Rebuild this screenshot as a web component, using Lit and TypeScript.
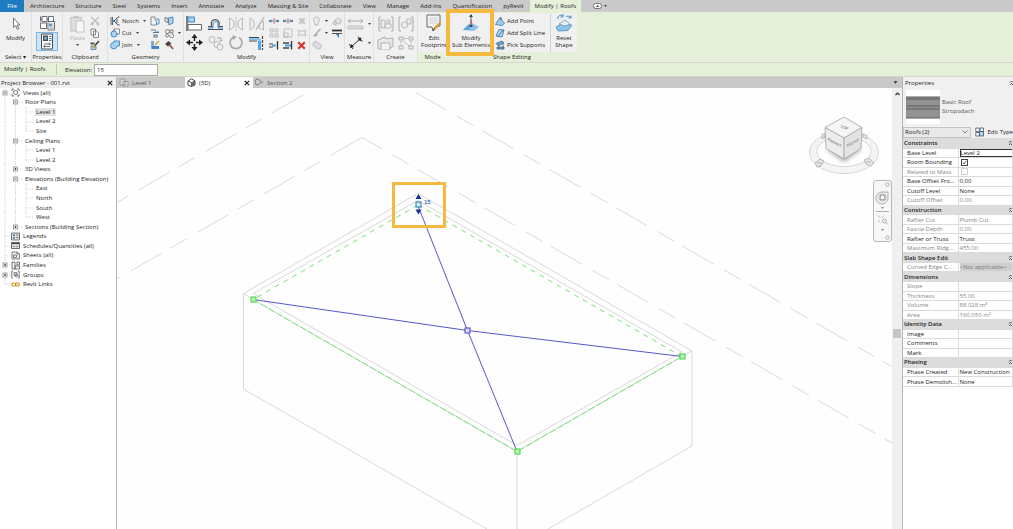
import { LitElement, html, svg, css, nothing, SVGTemplateResult, TemplateResult } from "lit";
import { customElement, property, state } from "lit/decorators.js";
import { classMap } from "lit/directives/class-map.js";

const G = "#b9b9b9";
const D = "#4a5058";
const B = "#3b86c6";
const L = "#a9d3f0";

const ICONS: Record<string, [number, number, SVGTemplateResult]> = {
  cursor: [8, 14, svg`<path d="M1.5 1v9.5l2.2-2 1.6 3.8 1.5-.7-1.6-3.6h2.6z" fill="#fff" stroke="#555" stroke-width=".8"/>`],
  types: [17, 16, svg`<g fill="#fdfdfd" stroke=${D} stroke-width=".8"><path d="M3 1.500h5v5H3zM9.500 1.500h5v5h-5zM1.500 8h6v5.500h-6zM1.500 1.500v5M8 4h1.500M1.500 4H3"/><path d="M9 6.500h6.500v8.500H9z"/></g><path d="M10.300 8.500h2.400v3h-2.400z" fill=${B}/><path d="M13.500 9h1M13.500 11h1M10.500 13h4" stroke=${D} stroke-width=".7"/>`],
  props: [16, 17, svg`<path d="M2.500 1h11v15h-11z" fill="#f4f9fd" stroke=${D} stroke-width="1"/><path d="M4 2.500h5v5.500H4z" fill=${D}/><path d="M5.300 4h2.400v2.500H5.300z" fill="#7db9e4"/><path d="M10 3.500h2.500M10 5.500h2.500M10 7.500h2.500M5 11h6M5 13.500h6M10 10l1.500 1-1.500 1M6 12.500l-1.500 1 1.500 1" fill="none" stroke=${D} stroke-width=".8"/>`],
  paste: [15, 18, svg`<path d="M.8 2.500h10.500v13.500H.8z" fill="#dedede" stroke="#c2c2c2"/><path d="M3.500 1h5v2.500h-5z" fill="#c6c6c6"/><path d="M6 6h8v11H6z" fill="#f7f7f7" stroke="#c2c2c2"/>`],
  scissors: [10, 10, svg`<path d="M1 1l7 6.500M9 1L2 7.500" stroke="#bdbdbd" stroke-width="1.100"/><circle cx="2" cy="8" r="1.200" fill="none" stroke="#bdbdbd"/><circle cx="8" cy="8" r="1.200" fill="none" stroke="#bdbdbd"/>`],
  copy: [10, 10, svg`<path d="M1 1h4.500v6H1zM3.500 3h3l2 2v4.500h-5z" fill="#fafafa" stroke="#6a6f76" stroke-width=".8"/>`],
  match: [10, 10, svg`<path d="M.5 2.500h4v2h-4z" fill="#555"/><path d="M1 6h5v3.500H1z" fill=${L} stroke="#557" stroke-width=".6"/><path d="M9 1L4.500 6" stroke="#444" stroke-width="1.600"/><path d="M5 5.500L3.500 8" stroke="#d79a2e" stroke-width="1.600"/>`],
  notch: [10, 10, svg`<path d="M1 1v8M2.500 1v8" stroke=${D} stroke-width=".9"/><path d="M9.500 1H8L4 5l4 4h1.500M7 3v4" fill="none" stroke=${D} stroke-width="1"/><path d="M2 4h2v2H2z" fill=${B}/>`],
  cut: [10, 10, svg`<path d="M4 1h5.500v5H4z" fill="#fff" stroke="#6f747a" stroke-width=".8"/><path d="M4 1v5h4" fill="none" stroke="#c64b4b" stroke-width=".8"/><circle cx="4" cy="6" r="3" fill=${L} stroke=${B} stroke-width=".9"/>`],
  join: [10, 10, svg`<path d="M4 1h5.500v5H7a3.200 3.200 0 1 1-3-3.500z" fill=${L} stroke=${B} stroke-width=".9"/>`],
  cope: [10, 10, svg`<path d="M1 1h4v3l1.500 1v4H1z" fill="#eef5fa" stroke="#69727b" stroke-width=".8"/><path d="M6 3h3v5H6" fill="none" stroke=${B} stroke-width=".9"/>`],
  face: [10, 10, svg`<path d="M4 2l5-1v6L5 9z" fill=${L} stroke=${B} stroke-width=".9"/><path d="M1 1.500l3 1v4l-3-1z" fill="#eee" stroke="#555" stroke-width=".7"/>`],
  wallj: [10, 10, svg`<path d="M1 2h5M3 4.500h6M4 7h3v2H4z" fill="none" stroke="#6a7077" stroke-width="1.100"/><path d="M5 4h4" stroke=${B}/>`],
  split: [10, 10, svg`<circle cx="3.500" cy="3.500" r="2" fill="none" stroke="#666" stroke-width=".8"/><circle cx="3" cy="7.500" r="1.500" fill="none" stroke="#666" stroke-width=".8"/><path d="M6 2h3v3H6zM6 7a2 2 0 1 0 2-1" fill="none" stroke="#666" stroke-width=".8"/>`],
  paint: [10, 10, svg`<path d="M1 1h3v8H1z" fill="#78aed8"/><path d="M2 6h7v3H2z" fill=${B}/><path d="M9 1L5 5" stroke="#d8a33b" stroke-width="1.500"/>`],
  hammer: [10, 10, svg`<path d="M1 4L4.500 1l3 2.500-3.500 3z" fill="#444"/><path d="M5 4l4 5" stroke="#94472f" stroke-width="1.500"/>`],
  align: [17, 17, svg`<path d="M1 1v15" stroke="#333" stroke-width="1.200"/><path d="M2 2h6.500v5H2z" fill=${L} stroke=${B}/><path d="M2 9.500h13.500v5.500H2z" fill="#fff" stroke="#666"/>`],
  offset: [17, 14, svg`<path d="M1 12.500h15M1 9.500h3.500V8A4 4 0 1 1 12 8v1.500h4" fill="none" stroke=${D} stroke-width="1.200"/><path d="M1 11h5V8a2.600 2.600 0 1 1 5 0v3h5" fill="none" stroke=${B} stroke-width="1"/>`],
  mirror: [16, 16, svg`<path d="M1.500 2l4.500 3v6l-4.500 3zM14.500 2L10 5v6l4.500 3z" fill="#eee" stroke=${G}/><path d="M8 1v14" stroke=${G} stroke-dasharray="2 1"/>`],
  mirror2: [16, 16, svg`<path d="M1 2l4 3v6l-4 3zM14.500 5L10 8v4l4.500 2z" fill="#eee" stroke=${G}/><path d="M15 1L7 14" stroke=${G} stroke-width="1.300"/>`],
  move: [17, 17, svg`<path d="M8.500 3v11M3 8.500h11" stroke="#222" stroke-width="1.500"/><path d="M8.500 0l3 4h-6zM8.500 17l3-4h-6zM0 8.500l4-3v6zM17 8.500l-4-3v6z" fill="#222"/><path d="M7 7h3v3H7z" fill="#f0f0f0"/>`],
  copies: [16, 16, svg`<circle cx="4" cy="4.500" r="3" fill="#eee" stroke=${G}/><circle cx="9" cy="9.500" r="3" fill="#eee" stroke=${G}/><circle cx="12" cy="12" r="3" fill="#eee" stroke=${G}/><path d="M9 3h4v3M11.500 5l1.500 1.500L14.500 5" fill="none" stroke="#aaa"/>`],
  rotate: [16, 17, svg`<path d="M5 3.500a6 6 0 1 0 6 0" fill="none" stroke="#aaa" stroke-width="1.800"/><path d="M4.500 1l4.500 2-4 3z" fill="#aaa"/>`],
  trim: [17, 17, svg`<path d="M1 3.500h10M1 7h8" stroke="#444" stroke-width="1.100"/><path d="M1 5.200h10.500V16" fill="none" stroke="#7bbce8" stroke-width="2"/><path d="M11.500 7v9" stroke="#54a6dc" stroke-width="3"/><path d="M14.500 2v14" stroke="#444" stroke-width="1.200" stroke-dasharray="3 1"/>`],
  splitE: [10, 8, svg`<path d="M0 4h3M7 4h3" stroke="#444" stroke-width="1.600"/><path d="M1.500 4h2M6.500 4h2" stroke="#4da0d8" stroke-width="2.500"/><path d="M5 1.500v5" stroke="#d14a3d" stroke-width="1"/>`],
  arrayI: [10, 10, svg`<path d="M1 1h3v3H1zM6 1h3v3H6zM1 6h3v3H1zM6 6h3v3H6z" fill="#eee" stroke=${G} stroke-width=".9"/>`],
  scale: [10, 10, svg`<path d="M1 1h8v8H1zM1 5h4v4H1z" fill="#eee" stroke=${G} stroke-width=".9"/>`],
  pin: [10, 10, svg`<path d="M2 2l6 6M8 2L2 8M3 3h4v4H3z" fill="#e6e6e6" stroke=${G} stroke-width=".9"/>`],
  unpin: [10, 8, svg`<path d="M1 1l2 1h4l2-1-1 3 1 3-2-1H3L1 7l1-3z" fill="#eee" stroke=${G} stroke-width=".9"/>`],
  extend: [10, 10, svg`<path d="M0 4h4M0 7h4" stroke="#444"/><path d="M3 5.500h4" stroke="#4da0d8" stroke-width="2"/><path d="M8.500 1v8.500" stroke="#333" stroke-width="1.300"/>`],
  extend2: [10, 10, svg`<path d="M0 3h6M0 8h6" stroke="#444" stroke-width="1.400"/><path d="M2 5.500h6" stroke="#4da0d8" stroke-width="2"/><path d="M8.500 1v8.500" stroke="#333" stroke-width="1.300"/>`],
  del: [9, 9, svg`<path d="M1.200 1.200l6.600 6.600M7.800 1.200L1.200 7.800" stroke="#d3342c" stroke-width="2.200"/>`],
  bulb: [9, 10, svg`<path d="M3 7C1 5 1.500 1 4.500 1S8 5 6 7v2H3z" fill="#eee" stroke="#b0b0b0" stroke-width=".9"/>`],
  boxes: [10, 9, svg`<path d="M3 3l3-2 3 1.500v3L6 7 3 5.500zM1 5l3-1v4L1 7z" fill="#e3e3e3" stroke=${G} stroke-width=".9"/>`],
  brush: [9, 10, svg`<path d="M8.500 1L4 5.500" stroke="#aaa" stroke-width="1.400"/><path d="M4.500 5L1 8l3 .5 1.500-2z" fill="#a2a2a2"/>`],
  lines: [10, 9, svg`<path d="M0 1.500h10" stroke="#333" stroke-width="1.800"/><path d="M0 4.500h10" stroke="#555" stroke-width="1"/><path d="M4 5l3 4V5z" fill="#2a7fc3"/>`],
  eraser: [10, 10, svg`<path d="M1 3l3-2 5 4v3L6 9 1 5.500z" fill="#ddd" stroke=${G} stroke-width=".9"/>`],
  dim: [17, 12, svg`<path d="M1 3h15M3.500 1L1 3l2.500 2M13.500 1L16 3l-2.500 2" fill="none" stroke="#aaa"/><path d="M1 8h15v3H1z" fill="#dcdcdc" stroke=${G} stroke-width=".8"/>`],
  diag: [16, 15, svg`<path d="M3.500 11.500L12 4" stroke="#333"/><path d="M1 9l4 5M10 1.500l4.500 5" stroke="#333" stroke-width="1"/><path d="M2 13l4-1-3-3zM13.500 2.500l-4 1 3 3z" fill="#222"/>`],
  grp1: [16, 16, svg`<path d="M3 1H1v14h2M13 1h2v14h-2" fill="none" stroke="#aaa"/><path d="M3 4h4v8H3zM7 8h6v4H7zM9 4h3v3H9z" fill="#eee" stroke=${G}/>`],
  grp2: [16, 16, svg`<path d="M3 1H1v14h2M13 1h2v14h-2" fill="none" stroke="#aaa"/><path d="M9 3h4v5H9z" fill="#eee" stroke=${G}/><circle cx="6.500" cy="9" r="3" fill="#eee" stroke=${G}/>`],
  grp3: [17, 15, svg`<path d="M1 5l7-3 1 2 7-1v8l-3 3H1z" fill="#e8e8e8" stroke="#b0b0b0"/><path d="M4 14V8h9v6" fill="#f4f4f4" stroke="#b0b0b0"/>`],
  grp4: [16, 16, svg`<path d="M1 2h4v3H1zM11 2h4v3h-4zM1 11h4v3H1zM11 11h4v3h-4z" fill="#eee" stroke="#b0b0b0"/><path d="M6 3.500h4M3 6v4M5 6l6 5M13 6v4" stroke="#aaa" stroke-dasharray="2 1"/>`],
  foot: [16, 18, svg`<path d="M1 1h13v11l-5 1-2 4-1-4H1z" fill="#f4f4f4" stroke="#666"/><path d="M3 3h9v7H3z" fill="#e0e2e4"/><path d="M14.500 8.500l-6.500 7" stroke="#d59a32" stroke-width="2.200"/><path d="M8.500 14.500L7 17" stroke="#444"/>`],
  sub: [18, 18, svg`<path d="M1 16l6-6 3-1 7 4-5 4z" fill="#8cc2e8"/><path d="M1 16l6-6 1 6z" fill="#5da7d9"/><path d="M9 3v9" stroke="#444" stroke-width=".9"/><path d="M9 0l2 3H7z" fill="#444"/><path d="M8 6.500h2v2.500H8z" fill="#e0645c"/><path d="M7.500 11h3v2h-3z" fill="#444"/>`],
  addp: [10, 10, svg`<path d="M.5 8.500L4.500 2l5 5-2 2.500z" fill="#9accec" stroke="#47779c" stroke-width=".8"/><path d="M5.500 1l1 3" stroke="#444"/>`],
  adds: [10, 10, svg`<path d="M1 8l3-6.500 5 .500L7 9z" fill="#b6dbf3" stroke="#47779c" stroke-width=".9"/><path d="M8 2L3 8.500" stroke="#3576a8"/>`],
  pick: [10, 10, svg`<path d="M1 3.500l6-2.500 2 2-6 2.500zM2 7h7v2H2z" fill="#6eaedb" stroke="#44627c" stroke-width=".8"/><path d="M4 4v5M8 3v6" stroke="#44627c" stroke-width=".8"/>`],
  reset: [18, 18, svg`<path d="M1 13l5-3 11 1-4 5.500-10 .5z" fill="#8cc4ea" stroke="#4b8cbb" stroke-width=".8"/><path d="M4 10l6-4 5 4-5 2z" fill="#e9f4fb" stroke="#6b8ba3" stroke-width=".7"/><path d="M3 5a3 3 0 0 1 5-3M8 0v3H5.500M11 3a3 3 0 0 1 5 1M16 1.500V4h-2.500" fill="none" stroke="#3f8fca" stroke-width="1"/>`],
  views: [9, 9, svg`<path d="M1 3V1h2M6 1h2v2M8 6v2H6M3 8H1V6" fill="none" stroke="#555" stroke-width=".8"/><circle cx="4.500" cy="4.500" r="2.100" fill="none" stroke="#555" stroke-width=".8"/>`],
  legends: [9, 9, svg`<path d="M.5 1h8v7h-8z" fill="#dfe3e6" stroke="#555" stroke-width=".8"/><path d="M2 2.500h2v1.500H2zM2 5h2v1.500H2z" fill="#4d6f86"/><path d="M5 3h2.500M5 5.500h2.500" stroke="#555" stroke-width=".7"/>`],
  sched: [9, 9, svg`<path d="M.5 1.500h8v6h-8z" fill="#f3f3f3" stroke="#444" stroke-width=".8"/><path d="M.5 2.500h8" stroke="#444" stroke-width="1.200"/><path d="M3 3v4.500M6 3v4.500M1 5.500h7" stroke="#888" stroke-width=".6"/>`],
  sheets: [9, 9, svg`<path d="M1 1h5l2.500 2v5H1zM6 1v2h2.500M2.500 4h3v2.500h-3z" fill="#eef1f4" stroke="#5b6670" stroke-width=".8"/>`],
  fam: [9, 9, svg`<path d="M1 1h3v7H1zM4 5h4.500v3H4zM6 1h2.500v3H6z" fill="#f3f3f3" stroke="#555" stroke-width=".8"/>`],
  groups: [9, 9, svg`<path d="M2 1H.8v7H2M7 1h1.200v7H7" fill="none" stroke="#555" stroke-width=".8"/><path d="M3 2.500h3v3H3z" fill="#ccd" stroke="#667" stroke-width=".7"/><circle cx="5.500" cy="5.800" r="1.400" fill="none" stroke="#667" stroke-width=".7"/>`],
  link: [9, 9, svg`<rect x=".8" y="3" width="4" height="3" rx="1.500" fill="none" stroke="#d0981d" stroke-width="1.200"/><rect x="4.400" y="3" width="4" height="3" rx="1.500" fill="none" stroke="#c48c14" stroke-width="1.200"/>`],
  plan: [10, 9, svg`<path d="M1 1h5v6H1zM4 3.500h5V8H4z" fill="#d6d6d6" stroke="#909090" stroke-width=".8"/>`],
  cube: [9, 9, svg`<path d="M4.500 .8L8 3v4L4.500 8.500 1 7V3z" fill="#fff" stroke="#333" stroke-width=".9"/><path d="M1 3l3.500 1.600L8 3M4.500 4.600v3.800" fill="none" stroke="#333" stroke-width=".8"/><path d="M4.500 5L8 3.500V7L4.500 8.300z" fill="#667"/>`],
  section: [9, 9, svg`<path d="M3 1l3.500 3L3 7M3 1a3 3 0 0 0 0 6M6.500 4H8" fill="none" stroke="#777" stroke-width=".9"/>`],
  close: [6, 6, svg`<path d="M.8.8l4.400 4.400M5.200.8L.8 5.200" stroke="#222" stroke-width="1.200"/>`],
  down: [5, 3, svg`<path d="M.5 0h4l-2 3z" fill="#444"/>`],
  tiny: [3, 2, svg`<path d="M0 0h3L1.500 2z" fill="#444"/>`],
  upc: [5, 4, svg`<path d="M.5 3l2-2 2 2" fill="none" stroke="#333" stroke-width="1.200"/>`],
  chev: [6, 4, svg`<path d="M.5.500L3 3 5.500.500" fill="none" stroke="#777" stroke-width=".9"/>`],
  etype: [9, 10, svg`<path d="M.8 1h3.500v3.500H.8zM5 1h3.500v3.500H5zM.8 5.500h3.500V9H.8z" fill="#fff" stroke="#3f5569" stroke-width=".8"/><path d="M4.500 4.500h4V9h-4z" fill=${L} stroke="#3f5569" stroke-width=".8"/>`],
  addin: [9, 6, svg`<rect x=".5" y=".5" width="8" height="5" rx="2" fill="#f4f4f4" stroke="#666" stroke-width=".9"/><path d="M3 4l1.500-2L6 4z" fill="#444"/>`],
  fold: [4, 6, svg`<path d="M1 2.500l1.500-1.500L4 2.500M1 5l1.500-1.500L4 5" fill="none" stroke="#333" stroke-width=".8"/>`],
  roof: [34, 34, svg`<path d="M0 0h34v34H0z" fill="#fff"/><path d="M0 7h34v21H0z" fill="#929292"/><path d="M0 7h34M0 9h34M0 16h34M0 19h34M0 28h34" stroke="#5c5c5c"/>`],
};

const icon = (name: string) => {
  const [w, h, body] = ICONS[name];
  return html`<svg width=${w} height=${h} viewBox="0 0 ${w} ${h}" aria-hidden="true">${body}</svg>`;
};

const shared = css`
  :host { font: 6px/8px "Open Sans", "Noto Sans", sans-serif; color: #1c1c1c; }
  * { box-sizing: border-box; }
  button, input, select { font: inherit; color: inherit; margin: 0; padding: 0; border: 0; background: none; border-radius: 0; }
  svg { display: block; flex: none; }
  ul { list-style: none; margin: 0; padding: 0; }
`;

@customElement("ribbon-bar")
class RibbonBar extends LitElement {
  static styles = [shared, css`
    :host { display: block; }
    .tabs { display: flex; gap: 1px; height: 12px; background: #cacaca; overflow: hidden; }
    .tab { padding: 0 5px; white-space: nowrap; line-height: 12px; }
    .file { background: #1f7bc0; color: #fff; width: 24px; padding: 0; }
    .active { background: #e5efda; }
    .addin { display: flex; align-items: center; gap: 2px; margin-left: 11px; }
    .body { display: flex; height: 51px; background: #e5efda; border-bottom: 1px solid #d4d8ce; }
    .panel { flex: none; display: flex; flex-direction: column; background: #f0f0f0; border-right: 1px solid #e0e0e0; }
    .title { height: 10px; line-height: 10px; text-align: center; white-space: nowrap; }
    .tools { flex: 1; display: flex; align-items: center; justify-content: center; margin-top: 2px; }
    .ctx { background: none; border: 0; }
    .ctx .tools { background: #f0f0f0; margin-top: 1px; }
    .big { display: flex; flex-direction: column; align-items: center; justify-content: flex-start; line-height: 7px; height: 38px; gap: 2px; white-space: nowrap; }
    .glyph { height: 19px; display: flex; align-items: center; }
    .dim { color: #b3b3b3; }
    .grid3 { display: grid; grid-template-rows: repeat(3, 12px); grid-auto-flow: column; align-items: center; gap: 0 4px; }
    .grid2 { display: grid; grid-template-rows: repeat(2, 19px); grid-auto-flow: column; place-items: center; gap: 0 4px; }
    .small { display: flex; align-items: center; gap: 2px; white-space: nowrap; min-height: 10px; min-width: 9px; }
    .small svg:nth-of-type(2) { margin-left: 2px; }
    .stack { display: flex; flex-direction: column; align-items: center; gap: 1px; }
    .on { background: #cbe4f7; border: 1px solid #7fb6e2; padding: 0 2px; }
    .select { width: 32px; } .properties { width: 31px; } .clipboard { width: 45px; }
    .geometry { width: 76px; } .modify { width: 126px; } .view { width: 35px; }
    .measure { width: 29px; } .create { width: 44px; } .mode { width: 29px; } .shape { width: 130px; }
    .clipboard .tools { gap: 5px; } .modify .tools { gap: 4px; }
    .mode .tools { justify-content: flex-end; }
    .hot { position: relative; display: flex; justify-content: center; width: 48px; }
    .mark { position: absolute; inset: -5px 0 -4px -1px; border: 4px solid #f5b93f; width: 48px; pointer-events: none; }
    .shape .tools { justify-content: flex-start; }
    .reset { display: flex; justify-content: center; border-left: 1px solid #d2d2d2; width: 27px; margin-left: auto; }
  `];
  private small(i: string, text = "", more = false) {
    return html`<button class="small" aria-label=${text || i}>${icon(i)}${text ? html`<span>${text}</span>` : nothing}${more ? icon("tiny") : nothing}</button>`;
  }
  private big(i: string, a: string, b: unknown = "") {
    return html`<button class="big"><span class="glyph">${icon(i)}</span><span>${a}<br />${b}</span></button>`;
  }
  private panel(cls: string, title: unknown, body: TemplateResult, ctx = false) {
    return html`<section class=${classMap({ panel: true, [cls]: true, ctx })}><div class="tools">${body}</div><div class="title">${title}</div></section>`;
  }
  render() {
    const tabs = ["Architecture", "Structure", "Steel", "Systems", "Insert", "Annotate", "Analyze", "Massing & Site", "Collaborate", "View", "Manage", "Add-Ins", "Quantification", "pyRevit", "Modify | Roofs"];
    const s = (i: string, t = "", m = false) => this.small(i, t, m);
    return html`
      <nav class="tabs"><button class="tab file">File</button>
        ${tabs.map((t, i) => html`<button class=${classMap({ tab: true, active: i === 14 })}>${t}</button>`)}
        <button class="addin" aria-label="Ribbon display">${icon("addin")}${icon("tiny")}</button></nav>
      <div class="body">
        ${this.panel("select", "Select ▾", this.big("cursor", "Modify"))}
        ${this.panel("properties", "Properties", html`<div class="stack"><button aria-label="Type properties">${icon("types")}</button><button class="on" aria-label="Properties">${icon("props")}</button></div>`)}
        ${this.panel("clipboard", "Clipboard", html`<button class="big dim" disabled><span class="glyph">${icon("paste")}</span><span>Paste</span>${icon("tiny")}</button><div class="grid3">${s("scissors")}${s("copy")}${s("match")}</div>`)}
        ${this.panel("geometry", "Geometry", html`<div class="grid3">${s("notch", "Notch", true)}${s("cut", "Cut", true)}${s("join", "Join", true)}${s("cope")}${s("wallj")}${s("paint")}${s("face")}${s("split", "", true)}${s("hammer")}</div>`)}
        ${this.panel("modify", "Modify", html`<div class="grid2">${["align", "move", "offset", "copies", "mirror", "rotate", "mirror2", "trim"].map((i) => html`<button aria-label=${i}>${icon(i)}</button>`)}</div><div class="grid3">${s("splitE")}${s("arrayI")}${s("extend")}${s("splitE")}${s("scale")}${s("extend2")}${s("pin")}${s("unpin")}${s("del")}</div>`)}
        ${this.panel("view", "View", html`<div class="grid3">${s("bulb", "", true)}${s("brush", "", true)}${s("eraser")}${s("boxes")}${s("lines")}</div>`)}
        ${this.panel("measure", "Measure", html`<div class="grid2">${s("dim", "", true)}${s("diag", "", true)}</div>`)}
        ${this.panel("create", "Create", html`<div class="grid2">${["grp1", "grp3", "grp2", "grp4"].map((i) => html`<button aria-label=${i}>${icon(i)}</button>`)}</div>`)}
        ${this.panel("mode", "Mode", this.big("foot", "Edit", "Footprint"), true)}
        ${this.panel("shape", "Shape Editing", html`<div class="hot">${this.big("sub", "Modify", "Sub Elements")}<div class="mark"></div></div>
          <div class="grid3">${s("addp", "Add Point")}${s("adds", "Add Split Line")}${s("pick", "Pick Supports")}</div>
          <div class="reset">${this.big("reset", "Reset", "Shape")}</div>`, true)}
      </div>`;
  }
}

type Node = { t: string; d: number; i?: string; x?: "+" | "-"; sel?: boolean; last?: boolean };
const TREE: Node[] = [
  { t: "Views (all)", d: 0, i: "views", x: "-" },
  { t: "Floor Plans", d: 1, x: "-" },
  { t: "Level 1", d: 2, sel: true }, { t: "Level 2", d: 2 }, { t: "Site", d: 2, last: true },
  { t: "Ceiling Plans", d: 1, x: "-" },
  { t: "Level 1", d: 2 }, { t: "Level 2", d: 2, last: true },
  { t: "3D Views", d: 1, x: "+" },
  { t: "Elevations (Building Elevation)", d: 1, x: "-" },
  { t: "East", d: 2 }, { t: "North", d: 2 }, { t: "South", d: 2 }, { t: "West", d: 2, last: true },
  { t: "Sections (Building Section)", d: 1, x: "+", last: true },
  { t: "Legends", d: 0, i: "legends" }, { t: "Schedules/Quantities (all)", d: 0, i: "sched" },
  { t: "Sheets (all)", d: 0, i: "sheets" }, { t: "Families", d: 0, i: "fam", x: "+" },
  { t: "Groups", d: 0, i: "groups", x: "+" }, { t: "Revit Links", d: 0, i: "link", last: true },
];

@customElement("project-browser")
class ProjectBrowser extends LitElement {
  static styles = [shared, css`
    :host { display: block; background: #fff; border-right: 1px solid #b5b5b5; overflow: hidden; }
    .head { display: flex; justify-content: space-between; align-items: center; height: 11px; padding: 0 3px 0 1px; background: #f0f0f0; }
    .tree { display: grid; grid-auto-rows: 1fr; height: 201px; }
    .node { display: flex; align-items: center; white-space: nowrap; min-height: 0; }
    .node svg { overflow: visible; }
    .icon { margin-right: 2px; }
    .label { padding: 0 1px; }
    .sel { background: #e3e3e3; }
  `];
  private guide(n: Node) {
    const w = [11, 24, 35][n.d];
    const cx = n.d === 0 ? 5 : 15.5;
    const box = n.x ? svg`<rect x=${cx - 2} y="3" width="4" height="4" fill="#fff" stroke="#8c8c8c" stroke-width=".8"/><path d="M${cx - 1} 5h2${n.x === "+" ? `M${cx} 4v2` : ""}" stroke="#333" stroke-width=".8"/>` : nothing;
    const lines = n.d === 0 ? `M5 0V${n.last ? 5 : 10}M5 5h6` : n.d === 1 ? `M5 0v10M15.500 0V${n.last ? 5 : 10}M15.500 5h7` : `M5 0v10M15.500 0v10M26 0V${n.last ? 5 : 10}M26 5h7`;
    return html`<svg width=${w} height="10" viewBox="0 0 ${w} 10" aria-hidden="true"><path d=${lines} fill="none" stroke="#c9c9c9" stroke-width=".8" stroke-dasharray="1 1"/>${box}</svg>`;
  }
  render() {
    return html`<div class="head"><span>Project Browser - 001.rvt</span><button aria-label="Close">${icon("close")}</button></div>
      <ul class="tree">${TREE.map((n) => html`<li class="node">${this.guide(n)}${n.i ? html`<span class="icon">${icon(n.i)}</span>` : nothing}<span class=${classMap({ label: true, sel: !!n.sel })}>${n.t}</span></li>`)}</ul>`;
  }
}

@customElement("model-view")
class ModelView extends LitElement {
  static styles = [shared, css`
    :host { display: flex; flex-direction: column; min-width: 0; background: #fefefe; }
    .tabs { display: flex; height: 11px; background: #c9c9c9; align-items: center; padding-right: 4px; }
    .tab { display: flex; align-items: center; gap: 3px; width: 68px; height: 11px; padding: 0 3px 0 2px; color: #555; text-align: left; }
    .tab span { flex: 1; }
    .active { background: #fefefe; color: #222; }
    .menu { margin-left: auto; }
    .stage { flex: 1; display: flex; min-height: 0; }
    .canvas { position: relative; flex: 1; overflow: hidden; min-width: 0; }
    .scene { position: absolute; inset: 0; width: 100%; height: 100%; }
    .orbit { position: absolute; right: 11px; top: 23px; }
    .nav { position: absolute; right: 0; top: 92px; width: 19px; height: 62px; border: 1px solid #b9b9b9; border-radius: 3px; background: #f7f7f7; }
    .scroll { width: 10px; background: #f0f0f0; display: flex; flex-direction: column; align-items: center; padding-top: 4px; }
    .thumb { width: 8px; height: 9px; margin-top: 233px; background: #c6c6c6; }
    .word { font: 6px "Liberation Sans", sans-serif; fill: #1c3fa0; }
    .face { font: bold 4px "Liberation Sans", sans-serif; fill: #8f8f8f; text-anchor: middle; }
  `];
  private grip(x: number, y: number, stroke: string, fill: string) {
    return svg`<rect x=${x - 2.5} y=${y - 2.5} width="5" height="5" fill=${fill} stroke=${stroke}/>`;
  }
  render() {
    return html`
      <div class="tabs">
        <button class="tab">${icon("plan")}<span>Level 1</span></button>
        <button class="tab active">${icon("cube")}<span>(3D)</span>${icon("close")}</button>
        <button class="tab">${icon("section")}<span>Section 2</span></button>
        <button class="menu" aria-label="View list">${icon("down")}</button>
      </div>
      <div class="stage"><div class="canvas">
        <svg class="scene" role="img" aria-label="Roof in 3D"><g transform="translate(-117 -88)" fill="none">
          <g stroke="#d9d9d9" stroke-dasharray="36 12 19 10">
            <path d="M415.500 92.300L892 366.700"/>
            <path d="M362 137.300L892 443" stroke-dashoffset="13"/>
            <path d="M362 137.300L117 279"/>
            <path d="M312 90L117 202.500" stroke-dashoffset="67"/>
          </g>
          <g stroke="#d8d8d8">
            <path d="M418 193.500L243.500 293.500V389L487 529M418 193.500L692 351V446L548 529M517 454V529"/>
            <path d="M418 200.500L253 293.500 517 445.500 682 352z"/>
            <path d="M243.500 293.500L253 299.500M692 351L682 356.500"/>
          </g>
          <path d="M253 299.500L517 451.500 682 356.500" stroke="#dcdcdc"/>
          <path d="M418 205L253 299.500M418 205L682 356.500" stroke="#74e374" stroke-dasharray="5 5"/>
          <path d="M253 299.500L517 451.500 682 356.500" stroke="#74e374" stroke-dasharray="7 2"/>
          <path d="M418 206L467.500 330.500 517 451.500M253 299.500L467.500 330.500 682 356.500" stroke="#5656cf"/>
          ${this.grip(253.5, 299.5, "#3fd23f", "#b4f5b4")}${this.grip(682.5, 356.5, "#3fd23f", "#b4f5b4")}${this.grip(517.5, 451.5, "#3fd23f", "#b4f5b4")}
          ${this.grip(467.5, 330.5, "#4343c8", "#dadaf8")}${this.grip(418.5, 204.5, "#1f77b8", "#d7eefa")}
          <path d="M418.500 194l3 5h-6zM418.500 214.500l3-5h-6z" fill="#12329c"/>
          <text class="word" x="424" y="204">15</text>
          <rect x="393.500" y="183.500" width="51" height="43" stroke="#f5b93f" stroke-width="3"/>
        </g></svg>
        <svg class="orbit" width="74" height="66" viewBox="807 111 74 66" aria-hidden="true">
          <defs><filter id="blur"><feGaussianBlur stdDeviation="2"/></filter></defs>
          <path d="M809.500 152.500a34.500 21 0 1 0 69 0a34.500 21 0 1 0 -69 0M817 151.500a27 15 0 1 0 54 0a27 15 0 1 0 -54 0" fill="#f4f4f4" fill-rule="evenodd" stroke="#c4c4c4" stroke-dasharray="3 .6" stroke-width=".8"/>
          <path d="M826 149l18 13 18-13-18-6z" fill="#777" opacity=".6" filter="url(#blur)"/>
          <path d="M825 127.500l19-10.500 18 10.500-18 10.500z" fill="#f5f5f5" stroke="#a5a5a5" stroke-width=".8"/>
          <path d="M825 127.500l19 10.500v21l-18-10.500z" fill="#ececec" stroke="#a5a5a5" stroke-width=".8"/>
          <path d="M862 127.500L844 138v21l17-10.500z" fill="#e3e3e3" stroke="#a5a5a5" stroke-width=".8"/>
          <text class="face" transform="translate(844 129) rotate(18)">TOP</text>
          <text class="face" transform="translate(834.500 144) skewY(28)">FRONT</text>
          <text class="face" transform="translate(853 144) skewY(-28)">RIGHT</text>
          <g fill="#e6e6e6" stroke="#aaa" stroke-width=".8"><path d="M815 163l5-4 4 2-3 5-4 1zM864 160l5-2 5 5-3 3-5-2zM822 134.500l3-1v4l-3 1zM863 133.500l4 2v3l-4-1z"/><path d="M817 163h5M866 162h5"/></g>
        </svg>
        <div class="nav"><svg width="17" height="60" viewBox="0 0 17 60" aria-hidden="true">
          <g fill="none" stroke="#a6a6a6" stroke-width=".9"><circle cx="13.500" cy="3.500" r="1.700"/><circle cx="13.500" cy="56.500" r="1.700"/>
            <path d="M14 11v6a6 6 0 1 1-6-6z" fill="#eceff2"/><circle cx="8.500" cy="16.500" r="3.500" fill="#fff"/><rect x="6.500" y="14.500" width="4" height="4"/>
            <path d="M2 30.500h13M4 34.500l2 2M10 34.500l-2 2M4 41l2-2"/><circle cx="10.500" cy="40" r="1.900"/><path d="M12 41.500l2 2"/></g>
          <path d="M7 26h3l-1.500 2zM7 48h3l-1.500 2z" fill="#888"/></svg></div>
      </div>
      <div class="scroll">${icon("upc")}<div class="thumb"></div></div></div>`;
  }
}

type Row = { h: string } | { n: string; v?: string; k?: "input" | "on" | "off" | "na"; g?: boolean };
const ROWS: Row[] = [
  { h: "Constraints" }, { n: "Base Level", v: "Level 2", k: "input" }, { n: "Room Bounding", k: "on" },
  { n: "Related to Mass", k: "off", g: true }, { n: "Base Offset Fro...", v: "0.00" }, { n: "Cutoff Level", v: "None" },
  { n: "Cutoff Offset", v: "0.00", g: true }, { h: "Construction" }, { n: "Rafter Cut", v: "Plumb Cut", g: true },
  { n: "Fascia Depth", v: "0.00", g: true }, { n: "Rafter or Truss", v: "Truss" }, { n: "Maximum Ridg...", v: "455.00", g: true },
  { h: "Slab Shape Edit" }, { n: "Curved Edge C...", v: "<Not applicable>", k: "na", g: true }, { h: "Dimensions" },
  { n: "Slope", g: true }, { n: "Thickness", v: "55.00", g: true }, { n: "Volume", v: "88.028 m³", g: true },
  { n: "Area", v: "160.050 m²", g: true }, { h: "Identity Data" }, { n: "Image" }, { n: "Comments" }, { n: "Mark" },
  { h: "Phasing" }, { n: "Phase Created", v: "New Construction" }, { n: "Phase Demolish...", v: "None" },
];

@customElement("properties-palette")
class PropertiesPalette extends LitElement {
  static styles = [shared, css`
    :host { display: block; background: #fff; border-left: 1px solid #b5b5b5; overflow: hidden; }
    .top { background: #f0f0f0; }
    .head { display: flex; justify-content: space-between; align-items: center; height: 11px; padding-left: 2px; white-space: nowrap; }
    .type { display: flex; align-items: center; gap: 2px; padding: 2px 3px; line-height: 9px; color: #555; }
    .filter { display: flex; align-items: center; height: 12px; white-space: nowrap; gap: 4px; }
    .pick { position: relative; display: flex; width: 72px; height: 11px; align-items: center; border: 1px solid #c4c4c4; background: #e9e9e9; }
    .pick select { appearance: none; flex: 1; padding-left: 1px; height: 9px; }
    .pick svg { margin-right: 2px; }
    .edit { display: flex; align-items: center; gap: 3px; }
    table { width: 100%; height: 249px; border-collapse: collapse; table-layout: fixed; }
    .name { width: 55px; }
    th, td { padding: 0; line-height: 8px; border: 1px solid #dadada; border-left: 0; white-space: nowrap; overflow: hidden; text-align: left; font-weight: 400; }
    td { padding-left: 1px; }
    .group { background: #dcdcdc; padding-left: 1px; font-weight: 600; }
    .bar { display: flex; justify-content: space-between; align-items: center; }
    .n { padding-left: 4px; }
    .g { color: #858585; }
    .field { display: block; width: 53px; height: 8px; line-height: 6px; border: 1px solid #333; }
    .check { appearance: none; display: block; width: 7px; height: 7px; margin-left: 1px; border: 1px solid #444; background: #fff; }
    .check:checked { background: url("data:image/svg+xml,%3Csvg xmlns='http://www.w3.org/2000/svg' viewBox='0 0 5 5'%3E%3Cpath d='M.7 2.500L2 4 4.400.8' fill='none' stroke='%23333' stroke-width='.8'/%3E%3C/svg%3E"); }
    .check:disabled { border-color: #d2d2d2; }
    .na { display: block; width: 52px; background: #cfcfcf; color: #777; line-height: 8px; text-align: left; overflow: hidden; }
  `];
  private cell(r: Exclude<Row, { h: string }>) {
    switch (r.k) {
      case "input": return html`<input class="field" aria-label=${r.n} .value=${r.v ?? ""} />`;
      case "on": return html`<input class="check" type="checkbox" aria-label=${r.n} checked />`;
      case "off": return html`<input class="check" type="checkbox" aria-label=${r.n} disabled />`;
      case "na": return html`<button class="na" disabled>${r.v}</button>`;
      default: return r.v ?? nothing;
    }
  }
  render() {
    return html`<div class="top"><div class="head"><span>Properties</span>${icon("fold")}</div>
      <div class="type">${icon("roof")}<span>Basic Roof<br />Stropodach</span></div>
      <div class="filter"><span class="pick"><select aria-label="Selection filter"><option>Roofs (2)</option></select>${icon("chev")}</span><button class="edit">${icon("etype")}Edit Type</button></div></div>
      <table><colgroup><col class="name" /><col /></colgroup><tbody>
      ${ROWS.map((r) => "h" in r
        ? html`<tr><th class="group" colspan="2"><div class="bar">${r.h}${icon("fold")}</div></th></tr>`
        : html`<tr class=${classMap({ g: !!r.g })}><th class="n">${r.n}</th><td>${this.cell(r)}</td></tr>`)}
      </tbody></table>`;
  }
}

@customElement("app-root")
class AppRoot extends LitElement {
  @property() mode = "Modify | Roofs";
  @state() private elevation = "15";
  static styles = [shared, css`
    :host { display: flex; flex-direction: column; height: 100vh; overflow: hidden; background: #fff; }
    .options { display: flex; align-items: center; height: 14px; background: #e5efda; border-bottom: 1px solid #d2d6cc; padding-left: 4px; }
    .mode { width: 53px; height: 11px; line-height: 11px; border-right: 1px solid #c3cbb9; margin-right: 8px; }
    .label { width: 29px; }
    .value { width: 64px; height: 12px; background: #fff; border: 1px solid #a9a9a9; padding: 0 2px; }
    .work { flex: 1; display: grid; grid-template-columns: 117px minmax(0, 1fr) 111px; min-height: 0; }
  `];
  render() {
    return html`<ribbon-bar></ribbon-bar>
      <div class="options"><span class="mode">${this.mode}</span><label class="label" for="elev">Elevation:</label>
        <input class="value" id="elev" .value=${this.elevation} @input=${(e: Event) => (this.elevation = (e.target as HTMLInputElement).value)} /></div>
      <main class="work"><project-browser></project-browser><model-view></model-view><properties-palette></properties-palette></main>`;
  }
}
